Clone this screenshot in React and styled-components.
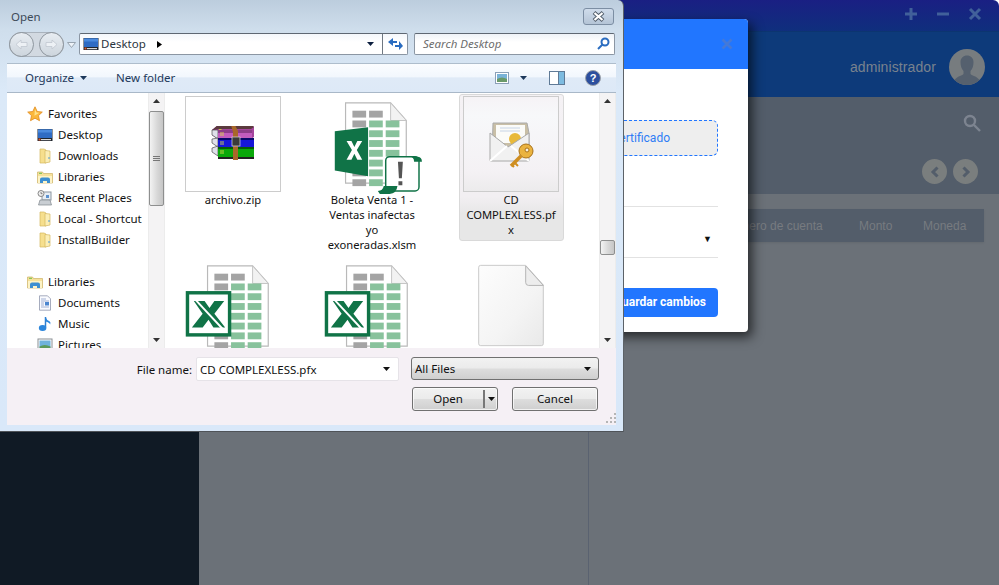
import React from 'react'
import styled, { createGlobalStyle } from 'styled-components'

const GlobalStyle = createGlobalStyle`
  html, body { margin: 0; padding: 0; background: #fff; }
  * { box-sizing: border-box; }
`

const UI_FONT = `'Noto Sans', 'Open Sans', sans-serif`
const WEB_FONT = `'Liberation Sans', Arial, sans-serif`

/* ---------- app behind the dialogs ---------- */

const Page = styled.div`
  position: relative;
  width: 999px;
  height: 585px;
  overflow: hidden;
  font-family: ${WEB_FONT};
`
const AppWindow = styled.div`
  display: flex;
  flex-direction: column;
  height: 100%;
  border-top-right-radius: 6px;
  overflow: hidden;
`
const TopBar = styled.div`
  flex: 0 0 32px;
  display: flex;
  justify-content: flex-end;
  align-items: center;
  gap: 18px;
  padding: 0 17px 4px 0;
  background: linear-gradient(#1a1f83, #0f2f7d);
  border-bottom: 1px solid #0c3570;
`
const WinGlyph = styled.svg`
  width: 14px;
  height: 14px;
  stroke: #41609a;
  stroke-width: 3;
  fill: none;
`
const Header = styled.div`
  flex: 0 0 65px;
  display: flex;
  justify-content: flex-end;
  align-items: center;
  gap: 13px;
  padding: 4px 14px 0 0;
  background: #0d3a7a;
`
const UserName = styled.span`
  font-size: 14px;
  letter-spacing: 0.1px;
  color: #79828e;
`
const Avatar = styled.svg`
  width: 36px;
  height: 36px;
  display: block;
`
const Body = styled.div`
  flex: 1;
  display: flex;
`
const Sidebar = styled.div`
  flex: 0 0 199px;
  background: #101a25;
`
const Main = styled.div`
  flex: 1;
  display: flex;
  flex-direction: column;
  background: #6b7178;
`
const MainHead = styled.div`
  flex: 0 0 97px;
  display: flex;
  flex-direction: column;
  align-items: flex-end;
  background: #535d6a;
  padding: 17px 21px 0 0;
`
const SearchIcon = styled.svg`
  width: 18px;
  height: 18px;
  margin-right: -3px;
  stroke: #7d8490;
  stroke-width: 2.4;
  fill: none;
`
const Pager = styled.div`
  display: flex;
  gap: 6px;
  margin-top: 27px;
`
const PagerButton = styled.div`
  width: 25px;
  height: 25px;
  border-radius: 50%;
  background: #7a7e7e;
  display: flex;
  align-items: center;
  justify-content: center;
  svg { width: 10px; height: 12px; stroke: #535d6a; stroke-width: 3; fill: none; }
`
const TableHead = styled.div`
  margin: 15px 15px 0 0;
  height: 33px;
  background: #535d6a;
  display: flex;
  justify-content: flex-end;
  align-items: center;
  font-size: 12px;
  color: #777b80;
  box-shadow: 0 1px 2px rgba(0, 0, 0, 0.08);
`
const HeadCell = styled.span`
  width: ${(p) => p.$w}px;
  flex: none;
  white-space: nowrap;
`
const TableBody = styled.div`
  flex: 1;
  margin-left: 389px;
  border-left: 1px solid #5a6270;
`

/* ---------- modal of the app ---------- */

const Modal = styled.div`
  position: absolute;
  left: 400px;
  top: 19px;
  width: 348px;
  height: 313px;
  background: #fff;
  border-radius: 4px;
  box-shadow: 4px 5px 12px rgba(0, 0, 0, 0.65);
  overflow: hidden;
  font-family: Roboto, ${WEB_FONT};
`
const ModalHead = styled.div`
  height: 50px;
  background: #2176ff;
  display: flex;
  justify-content: flex-end;
  align-items: center;
  padding-right: 15px;
  svg { width: 12px; height: 12px; stroke: #4479d8; stroke-width: 2.6; fill: none; }
`
const ModalBody = styled.div`
  padding: 51px 30px 0 0;
  display: flex;
  flex-direction: column;
  align-items: flex-end;
`
const DropZone = styled.div`
  width: 320px;
  height: 36px;
  background: #eeeeee;
  border: 1px dashed #2176ff;
  border-radius: 6px;
  display: flex;
  align-items: center;
  justify-content: flex-end;
  padding-right: 47px;
  font-size: 12px;
  color: #2f7df5;
`
const SelectRow = styled.div`
  width: 320px;
  height: 52px;
  margin-top: 50px;
  border-top: 1px solid #e2e2e2;
  border-bottom: 1px solid #e2e2e2;
  display: flex;
  align-items: center;
  justify-content: flex-end;
  padding: 14px 6px 0 0;
  font-size: 9px;
  color: #111;
`
const SaveButton = styled.div`
  width: 200px;
  height: 29px;
  margin-top: 30px;
  border-radius: 4px;
  background: #2176ff;
  color: #fff;
  font-size: 12px;
  font-weight: 700;
  display: flex;
  align-items: center;
  justify-content: flex-end;
  padding: 0 12px 2px 0;
`

/* ---------- Open dialog ---------- */

const Dialog = styled.div`
  position: absolute;
  left: 0;
  top: 0;
  width: 624px;
  height: 432px;
  display: flex;
  flex-direction: column;
  padding: 0 7px 6px;
  background: linear-gradient(#bccddd 0, #cfdeec 30px, #dbe9f8 90px, #d9e8f9 100%);
  border-right: 1px solid #5c6268;
  border-bottom: 1px solid #4f5358;
  border-top-right-radius: 6px;
  font-family: ${UI_FONT};
  font-size: 11.5px;
  color: #111;
`
const TitleBar = styled.div`
  height: 33px;
  flex: none;
  display: flex;
  justify-content: space-between;
  padding: 8px 2px 0 4px;
`
const Title = styled.span`
  color: #3d4a58;
  line-height: 18px;
`
const CloseButton = styled.div`
  width: 31px;
  height: 17px;
  border: 1px solid #7c8ea3;
  border-radius: 3px;
  background: linear-gradient(#cfdceb, #b4c4d6);
  display: flex;
  align-items: center;
  justify-content: center;
  svg { width: 13px; height: 11px; fill: none; }
`
const NavBar = styled.div`
  height: 30px;
  flex: none;
  display: flex;
  align-items: flex-start;
`
const BackForward = styled.div`
  width: 55px;
  height: 25px;
  margin: -1px 0 0 2px;
  flex: none;
  border-radius: 13px;
  background: #d2d9e1;
  box-shadow: inset 0 0 0 1px #aab3bd;
  display: flex;
  justify-content: space-between;
`
const RoundNav = styled.div`
  width: 25px;
  height: 25px;
  border-radius: 50%;
  border: 1px solid #8f979f;
  background: linear-gradient(#e8edf2, #cdd5dd);
  display: flex;
  align-items: center;
  justify-content: center;
  svg { width: 13px; height: 11px; fill: #edf1f5; stroke: #c0c7cf; stroke-width: 0.8; }
`
const HistoryCaret = styled.svg`
  width: 9px;
  height: 6px;
  margin: 9px 3px 0 3px;
  flex: none;
  fill: #eef3f8;
  stroke: #98a4b0;
`
const AddressBox = styled.div`
  width: 329px;
  height: 22px;
  flex: none;
  display: flex;
  align-items: center;
  background: linear-gradient(#f4f7fb, #fff 40%);
  border: 1px solid #8b96a3;
  border-top-color: #5e6772;
  border-radius: 2px;
  padding-left: 3px;
  color: #2a3440;
`
const AddressText = styled.span`
  margin: -2px 0 0 2px;
`
const Crumb = styled.svg`
  width: 5px;
  height: 7px;
  margin-left: 11px;
  fill: #000;
`
const AddressDrop = styled.div`
  margin-left: auto;
  width: 24px;
  height: 100%;
  display: flex;
  align-items: center;
  justify-content: center;
  border-right: 1px solid #6f7882;
`
const TinyCaret = styled.svg`
  width: 7px;
  height: 4px;
  flex: none;
  fill: ${(p) => p.$color || '#0c1f3f'};
`
const RefreshBox = styled.div`
  width: 24px;
  height: 100%;
  display: flex;
  align-items: center;
  justify-content: center;
  svg { width: 15px; height: 14px; fill: #2a6cc0; }
`
const SearchBox = styled.div`
  width: 201px;
  height: 22px;
  margin-left: 6px;
  flex: none;
  display: flex;
  align-items: center;
  justify-content: space-between;
  padding: 0 4px 2px 8px;
  background: linear-gradient(#eef2f7, #fff 40%);
  border: 1px solid #8b96a3;
  border-top-color: #5e6772;
  border-radius: 2px;
  font-style: italic;
  color: #6d6d6d;
  svg { width: 13px; height: 13px; stroke: #2a6cc0; fill: none; stroke-width: 2; }
`
const Pane = styled.div`
  flex: 1;
  display: flex;
  flex-direction: column;
  min-height: 0;
`
const ToolStrip = styled.div`
  height: 30px;
  flex: none;
  display: flex;
  align-items: center;
  padding: 0 15px 1px 18px;
  background: linear-gradient(#fbfdff 0, #f2f7fd 45%, #dfeaf7 50%, #dde9f7 100%);
  border-top: 1px solid #aebdcc;
  border-bottom: 1px solid #a9b8c8;
  color: #1e395b;
`
const ToolText = styled.span`
  white-space: nowrap;
`
const ToolIcon = styled.svg`
  display: block;
  flex: none;
  width: ${(p) => p.$w}px;
  height: ${(p) => p.$h}px;
  margin-left: ${(p) => p.$ml};
  margin-right: ${(p) => p.$mr || 0}px;
`
const Browser = styled.div`
  flex: 1;
  min-height: 0;
  display: flex;
  background: #fff;
`
const NavPane = styled.div`
  width: 141px;
  flex: none;
  overflow: hidden;
  padding-top: 10px;
`
const TreeRow = styled.div`
  height: 21px;
  display: flex;
  align-items: center;
  gap: 5px;
  padding-left: ${(p) => (p.$group ? 20 : 30)}px;
  margin-top: ${(p) => p.$gap || 0}px;
  white-space: nowrap;
  svg { width: 16px; height: 16px; flex: none; display: block; }
`
const ScrollBar = styled.div`
  width: 17px;
  flex: none;
  display: flex;
  flex-direction: column;
  align-items: center;
  background: #f4f3f4;
  border-left: 1px solid #ececec;
  border-right: 1px solid #ececec;
`
const ScrollArrow = styled.svg`
  width: 7px;
  height: 4px;
  flex: none;
  margin: ${(p) => p.$m};
  fill: #333;
`
const ScrollThumb = styled.div`
  width: 15px;
  height: ${(p) => p.$h}px;
  margin-top: ${(p) => p.$mt}px;
  flex: none;
  border: 1px solid #8e8f8f;
  border-radius: 2px;
  background: linear-gradient(90deg, #f3f3f3, #d8d8d8 55%, #c6c6c6);
  display: flex;
  flex-direction: column;
  justify-content: center;
  gap: 1px;
  align-items: center;
  i { display: block; width: 7px; height: 1px; background: #777; }
`
const FileArea = styled.div`
  flex: 1;
  min-width: 0;
  overflow: hidden;
  display: grid;
  grid-template-columns: repeat(3, 139px);
  justify-content: start;
  align-content: start;
  padding-top: 1px;
  margin-left: -1px;
`
const FileTile = styled.div`
  width: 105px;
  justify-self: center;
  padding: 1px 4px 3px 3px;
  border: 1px solid ${(p) => (p.$selected ? '#d9d9d9' : 'transparent')};
  border-radius: 3px;
  background: ${(p) => (p.$selected ? 'linear-gradient(#f5f2f5 0, #f2eff2 70%, #e7e7e7 82%)' : 'transparent')};
  text-align: center;
  line-height: 15px;
  align-self: start;
`
const Thumb = styled.div`
  width: 96px;
  height: 96px;
  border: 1px solid ${(p) => (p.$framed ? '#cccccc' : 'transparent')};
  background: ${(p) => (p.$selected ? 'linear-gradient(#f6f3f6, #f7f8fa 20%, #f4f1f4 80%, #ecebec)' : 'transparent')};
  display: flex;
  align-items: center;
  justify-content: center;
  svg { display: block; flex: none; }
`
const FileName = styled.div`
  word-break: break-word;
  margin: 0 -2px;
  font-size: 11.2px;
`
const Footer = styled.div`
  height: 77px;
  flex: none;
  display: grid;
  grid-template-columns: 189px 203px 188px;
  grid-template-rows: 24px 24px;
  row-gap: 6px;
  padding-top: 9px;
  background: #f5f0f5;
  position: relative;
`
const FileLabel = styled.label`
  display: flex;
  align-items: center;
  justify-content: flex-end;
  padding-right: 4px;
`
const NameInput = styled.div`
  display: flex;
  align-items: center;
  justify-content: space-between;
  padding: 0 8px 0 3px;
  background: #fff;
  border: 1px solid #e6e3e8;
  border-radius: 2px;
`
const TypeCombo = styled.div`
  margin-left: 12px;
  width: 188px;
  height: 23px;
  display: flex;
  align-items: center;
  justify-content: space-between;
  padding: 0 7px 0 3px;
  border: 1px solid #707070;
  border-radius: 3px;
  background: linear-gradient(#f2f2f2 0, #ebebeb 48%, #dddddd 52%, #cfcfcf 100%);
`
const ButtonRow = styled.div`
  grid-column: 2 / 4;
  display: flex;
  justify-content: flex-end;
  gap: 14px;
  margin-right: -11px;
`
const DialogButton = styled.div`
  width: ${(p) => p.$w}px;
  height: 24px;
  display: flex;
  align-items: center;
  justify-content: center;
  padding-bottom: 1px;
  border: 1px solid #707070;
  border-radius: 3px;
  background: linear-gradient(#f2f2f2 0, #ebebeb 48%, #dddddd 52%, #cfcfcf 100%);
  box-shadow: inset 0 0 0 1px rgba(255, 255, 255, 0.7);
`
const SplitLabel = styled.span`
  flex: 1;
  text-align: center;
`
const SplitDrop = styled.span`
  width: 14px;
  height: 18px;
  display: flex;
  align-items: center;
  justify-content: center;
  border-left: 2px solid #777;
`
const Grip = styled.svg`
  position: absolute;
  right: 0;
  bottom: 2px;
  width: 10px;
  height: 10px;
  fill: #b5b5b5;
`

/* ---------- drawn icons ---------- */

const DesktopIcon = () => (
  <svg viewBox="0 0 16 16" width="16" height="16">
    <rect x="0.5" y="2" width="15" height="12" fill="#20252c" />
    <rect x="1" y="2.5" width="14" height="8.5" fill="#2f6cc4" />
    <rect x="1" y="2.5" width="14" height="3" fill="#4a8ade" />
    <rect x="1.5" y="11.5" width="2" height="2" fill="#e05a2c" />
    <rect x="4" y="12" width="10" height="1.2" fill="#d8d8d8" />
  </svg>
)
const FolderIcon = () => (
  <svg viewBox="0 0 16 16">
    <path d="M3 1h4l2 1 0 13H3z" fill="#f6df8e" stroke="#d4b760" strokeWidth="0.7" />
    <path d="M8 2.5l5 .5v11l-5 1z" fill="#fbeeb6" stroke="#d4b760" strokeWidth="0.7" />
    <rect x="11.5" y="9" width="1" height="2" fill="#4f9ad8" />
  </svg>
)
const LibraryIcon = () => (
  <svg viewBox="0 0 16 16">
    <path d="M0.5 3h5l1 1.5h9V14H.5z" fill="#f6e19a" stroke="#cdb266" strokeWidth="0.7" />
    <rect x="2" y="3.8" width="3" height="1" fill="#6cc04a" />
    <path d="M1 7h14v7H1z" fill="#fdf3c6" />
    <path d="M3 14v-3.500q0-2 2-2h6q2 0 2 2V14h-3v-2H6v2z" fill="#3d8fd1" />
  </svg>
)
const RecentIcon = () => (
  <svg viewBox="0 0 16 16">
    <rect x="5" y="2" width="9" height="8" fill="#e6edf4" stroke="#8c96a0" />
    <rect x="9" y="5" width="3" height="3" fill="#5c92cf" />
    <circle cx="4" cy="3.5" r="3" fill="#eeeeee" stroke="#868686" />
    <path d="M4 2v1.700h1.500" stroke="#555" fill="none" strokeWidth="0.7" />
    <path d="M3 10h10l1.500 5h-13z" fill="#c9ced3" stroke="#7f868d" strokeWidth="0.7" />
  </svg>
)
const StarIcon = () => (
  <svg viewBox="0 0 16 16">
    <path d="M8 .8l2.200 4.700 5.100.6-3.800 3.500 1 5.100L8 12.200l-4.500 2.500 1-5.100L.7 6.100l5.100-.6z" fill="#fbb73a" stroke="#e08a1e" strokeWidth="0.8" />
    <path d="M8 3l1.400 3.400 3 .3-5 3z" fill="#ffe28a" />
  </svg>
)
const DocumentsIcon = () => (
  <svg viewBox="0 0 16 16">
    <path d="M2.500 .8h8l3 3v11.400h-11z" fill="#fafbff" stroke="#8f97ad" strokeWidth="0.8" />
    <path d="M4 4h5M4 6h8M4 8h3M4 10h3M4 12h8" stroke="#8aa0c8" strokeWidth="0.8" />
    <rect x="8" y="7" width="4" height="3.5" fill="#4c86cf" />
  </svg>
)
const MusicIcon = () => (
  <svg viewBox="0 0 16 16">
    <path d="M8.500 1v10.500" stroke="#2d7fd0" strokeWidth="1.5" />
    <ellipse cx="5.600" cy="12" rx="3.800" ry="3" fill="#2c86dc" />
    <path d="M8.500 1q1 3 4 4.200q1.500 1 .7 3.300q-.8-2.200-4.700-3z" fill="#2c86dc" />
  </svg>
)
const PicturesIcon = () => (
  <svg viewBox="0 0 16 16">
    <rect x="1" y="2" width="14" height="12" fill="#fff" stroke="#8a8f94" />
    <rect x="2.500" y="3.500" width="11" height="9" fill="#6fb2dc" />
    <path d="M2.500 12.500v-3q5-3 11 0v3z" fill="#5c9a5c" />
  </svg>
)
const ArchiveIcon = () => (
  <svg viewBox="0 2 44 36" width="44" height="36">
    <path d="M1 6l6-5h34l2 2v10l-3 2H7L1 11z" fill="#a5459c" />
    <path d="M1 6l6-5h34l2 2-3 2H7z" fill="#5b3a3e" />
    <path d="M8 5h3l-4 4z" fill="#c8c84a" />
    <path d="M1 6l6 0v9L1 11z" fill="#dfe0ea" stroke="#333" strokeWidth="0.6" />
    <rect x="7" y="6" width="34" height="8" fill="#c25cbe" />
    <rect x="7" y="6" width="34" height="3" fill="#8d3d89" />
    <path d="M1 15l6-1v9l-6-4z" fill="#dfe0ea" stroke="#333" strokeWidth="0.6" />
    <rect x="7" y="14" width="36" height="9" fill="#1616d8" />
    <rect x="7" y="14" width="36" height="2" fill="#08086a" />
    <path d="M1 24l6-2v10l-6-4z" fill="#dfe0ea" stroke="#333" strokeWidth="0.6" />
    <rect x="7" y="23" width="36" height="10" fill="#0aa80a" />
    <rect x="7" y="23" width="36" height="2" fill="#055c05" />
    <rect x="7" y="33" width="36" height="2" fill="#222" />
    <path d="M20 1h4l3 6v29h-5V8z" fill="#a8672a" />
    <rect x="21" y="13" width="8" height="9" fill="#3a3a3a" stroke="#ddd" strokeWidth="0.7" />
    <path d="M10 8v4M12 8v4M10 17v4M12 17v4M10 26v4M12 26v4" stroke="#d8d84a" strokeWidth="0.9" />
  </svg>
)
const Sheet = () => (
  <g>
    <path d="M1 1h46l16 18v64H1z" fill="#fff" stroke="#b9b9b9" strokeWidth="1.2" />
    <path d="M47 1v18h16z" fill="#f2f2f2" stroke="#c4c4c4" strokeWidth="1" />
    {[0, 1].map((c) => (
      <rect key={`top${c}`} x={8 + c * 17} y="9" width="14" height="7" fill="#a4a4a4" />
    ))}
    <rect x="8" y="19" width="14" height="7" fill="#a4a4a4" />
    {[0, 1, 2, 3, 4, 5, 6].map((r) =>
      [1, 2].map((c) => <rect key={`${r}-${c}`} x={8 + c * 17} y={19 + r * 10} width="14" height="7" fill="#88c29c" />)
    )}
    {[1, 2, 3, 4, 5, 6].map((r) => (
      <rect key={r} x="8" y={19 + r * 10} width="14" height="7" fill="#a4a4a4" />
    ))}
  </g>
)
const NewExcelIcon = () => (
  <svg viewBox="4 1 96 96" width="94" height="94" style={{ overflow: 'visible' }}>
    <g transform="translate(24 6)">
      <Sheet />
    </g>
    <path d="M14 36l34-4v50L14 76z" fill="#107347" />
    <path d="M26 46h5l3 6 3-6h5l-5.500 9 5.500 10h-5l-3-6-3 6h-5l5.500-10z" fill="#fff" />
    <rect x="66" y="62" width="34" height="35" rx="4" fill="#fff" stroke="#107347" strokeWidth="1.500" />
    <path d="M74 62h24q5 0 5 5h-8q0-5-5-5z" fill="#107347" />
    <path d="M58 97q5 0 6-5h14q-1 8-8 8H60z" fill="#107347" />
    <path d="M78.500 67h5l-1 17h-3zM79 87h4v4h-4z" fill="#555" />
  </svg>
)
const OldExcelIcon = () => (
  <svg viewBox="6 3 96 96" width="94" height="94" style={{ overflow: 'visible' }}>
    <g transform="translate(27 9)">
      <Sheet />
    </g>
    <rect x="7.500" y="37.500" width="43" height="43" fill="#fff" stroke="#107347" strokeWidth="3.500" />
    <path d="M14 46h11l5 7 5-7h10l-10 13 11 14H34l-5-8-6 8H12l11-14z" fill="#107347" />
    <path d="M16 45l28 30" stroke="#fff" strokeWidth="2" />
  </svg>
)
const CertificateIcon = () => (
  <svg viewBox="-2 0 48 48" width="48" height="48" style={{ overflow: 'visible' }}>
    <path d="M4 3h34l2 10v22H3z" fill="#c9bfa6" stroke="#aaa" />
    <rect x="7" y="5" width="29" height="18" fill="#fbfbf8" />
    <path d="M11 8h20M11 11h20" stroke="#c7d4e6" />
    <circle cx="26" cy="19" r="6" fill="#e8b93a" />
    <path d="M1 13l18 14 21-14v28H1z" fill="#f1f1f1" stroke="#a8a8a8" />
    <path d="M1 41l17-15M40 41L22 26" stroke="#fff" strokeWidth="2" />
    <circle cx="37" cy="31" r="7" fill="#eab33f" stroke="#a87118" />
    <circle cx="38" cy="30" r="2" fill="#f7f2e1" stroke="#a87118" />
    <path d="M32 36L22 46" stroke="#cf8e20" strokeWidth="3.500" />
    <path d="M26 43l3 3M23 45l2 2" stroke="#cf8e20" strokeWidth="2" />
  </svg>
)
const BlankIcon = () => (
  <svg viewBox="2 -1 96 96" width="94" height="94" style={{ overflow: 'visible' }}>
    <defs>
      <linearGradient id="blankFill" x1="0" y1="0" x2="1" y2="1">
        <stop offset="0" stopColor="#fdfdfd" />
        <stop offset="0.6" stopColor="#f4f4f4" />
        <stop offset="1" stopColor="#e9e9e9" />
      </linearGradient>
    </defs>
    <path d="M17 7.500q0-2 2-2h46l18 20v60q0 2-2 2H19q-2 0-2-2z" fill="url(#blankFill)" stroke="#c9c9c9" />
    <path d="M65 6v17q0 3 3 3h15z" fill="#ededed" stroke="#b4b4b4" />
  </svg>
)

const nameAt = (icon) => (typeof icon === 'function' ? React.createElement(icon) : icon)

const favorites = [
  ['Desktop', DesktopIcon],
  ['Downloads', FolderIcon],
  ['Libraries', LibraryIcon],
  ['Recent Places', RecentIcon],
  ['Local - Shortcut', FolderIcon],
  ['InstallBuilder', FolderIcon],
]
const libraries = [
  ['Documents', DocumentsIcon],
  ['Music', MusicIcon],
  ['Pictures', PicturesIcon],
]
const files = [
  { name: 'archivo.zip', icon: ArchiveIcon, framed: true },
  { name: 'Boleta Venta 1 - Ventas inafectas yo exoneradas.xlsm', icon: NewExcelIcon, lines: ['Boleta Venta 1 -', 'Ventas inafectas', 'yo', 'exoneradas.xlsm'] },
  { name: 'CD COMPLEXLESS.pfx', icon: CertificateIcon, framed: true, selected: true, lines: ['CD', 'COMPLEXLESS.pf', 'x'] },
  { name: '', icon: OldExcelIcon },
  { name: '', icon: OldExcelIcon },
  { name: '', icon: BlankIcon },
]

const Down = ({ color }) => (
  <TinyCaret viewBox="0 0 7 4" $color={color}>
    <path d="M0 0h7L3.500 4z" />
  </TinyCaret>
)

export default function App() {
  return (
    <Page>
      <GlobalStyle />
      <AppWindow>
        <TopBar>
          <WinGlyph viewBox="0 0 14 14"><path d="M7 1v12M1 7h12" /></WinGlyph>
          <WinGlyph viewBox="0 0 14 14"><path d="M1 7h12" /></WinGlyph>
          <WinGlyph viewBox="0 0 14 14"><path d="M2 2l10 10M12 2L2 12" /></WinGlyph>
        </TopBar>
        <Header>
          <UserName>administrador</UserName>
          <Avatar viewBox="0 0 36 36">
            <circle cx="18" cy="18" r="18" fill="#777c7f" />
            <path d="M5.500 31c3-4 7-4 9-6v-3c-2-2-3-5-3-9 0-4 3-6.500 6.500-6.500s6.500 2.500 6.500 6.500c0 4-1 7-3 9v3c2 2 6 2 9 6a18 18 0 0 1-25 0z" fill="#55606e" />
          </Avatar>
        </Header>
        <Body>
          <Sidebar />
          <Main>
            <MainHead>
              <SearchIcon viewBox="0 0 18 18">
                <circle cx="7" cy="7" r="5" />
                <path d="M11 11l6 6" />
              </SearchIcon>
              <Pager>
                <PagerButton><svg viewBox="0 0 10 12"><path d="M7.500 1.500L3 6l4.500 4.500" /></svg></PagerButton>
                <PagerButton><svg viewBox="0 0 10 12"><path d="M2.500 1.500L7 6l-4.500 4.500" /></svg></PagerButton>
              </Pager>
            </MainHead>
            <TableHead>
              <HeadCell $w={135}>Numero de cuenta</HeadCell>
              <HeadCell $w={64}>Monto</HeadCell>
              <HeadCell $w={61}>Moneda</HeadCell>
            </TableHead>
            <TableBody />
          </Main>
        </Body>
      </AppWindow>

      <Modal>
        <ModalHead>
          <svg viewBox="0 0 12 12"><path d="M1.500 1.500l9 9M10.500 1.500l-9 9" /></svg>
        </ModalHead>
        <ModalBody>
          <DropZone>Subir certificado</DropZone>
          <SelectRow>▼</SelectRow>
          <SaveButton>Guardar cambios</SaveButton>
        </ModalBody>
      </Modal>

      <Dialog>
        <TitleBar>
          <Title>Open</Title>
          <CloseButton>
            <svg viewBox="0 0 13 11">
              <path d="M2 1.500l9 8M11 1.500l-9 8" stroke="#4f5b68" strokeWidth="4" />
              <path d="M2.500 2l8 7M10.500 2l-8 7" stroke="#fff" strokeWidth="2.200" />
            </svg>
          </CloseButton>
        </TitleBar>
        <NavBar>
          <BackForward>
            <RoundNav><svg viewBox="0 0 13 11"><path d="M6 1L1 5.500 6 10V7.500h6v-4H6z" /></svg></RoundNav>
            <RoundNav><svg viewBox="0 0 13 11"><path d="M7 1l5 4.500L7 10V7.500H1v-4h6z" /></svg></RoundNav>
          </BackForward>
          <HistoryCaret viewBox="0 0 9 6"><path d="M.5.500h8L4.500 5.500z" /></HistoryCaret>
          <AddressBox>
            <DesktopIcon />
            <AddressText>Desktop</AddressText>
            <Crumb viewBox="0 0 5 7"><path d="M0 0l5 3.500L0 7z" /></Crumb>
            <AddressDrop><Down /></AddressDrop>
            <RefreshBox>
              <svg viewBox="0 0 15 14">
                <path d="M5 1v3h4v2H5v3L0 5zM11 13v-3H7V8h4V4l4 5z" />
              </svg>
            </RefreshBox>
          </AddressBox>
          <SearchBox>
            Search Desktop
            <svg viewBox="0 0 13 13"><circle cx="8" cy="5" r="3.500" /><path d="M5.500 7.500L1 12" /></svg>
          </SearchBox>
        </NavBar>
        <Pane>
          <ToolStrip>
            <ToolText>Organize</ToolText>
            <ToolIcon as="span" $w={6} $h={4} />
            <Down color="#1e395b" />
            <ToolIcon as="span" $w={29} $h={4} />
            <ToolText>New folder</ToolText>
            <ToolIcon viewBox="0 0 14 12" $w={14} $h={12} $ml="auto" $mr={11}>
              <rect x=".5" y=".5" width="13" height="11" fill="#fff" stroke="#8ba0b8" />
              <rect x="2" y="2" width="10" height="8" fill="#7ab3d8" />
              <path d="M2 10V7q5-3 10 0v3z" fill="#6a9a6a" />
            </ToolIcon>
            <Down color="#1e395b" />
            <ToolIcon viewBox="0 0 16 14" $w={16} $h={14} $ml="22px" $mr={20}>
              <rect x=".5" y=".5" width="15" height="13" fill="#fff" stroke="#5f7a96" />
              <rect x="10" y="1" width="5" height="12" fill="#7dbbe0" />
              <path d="M9.500 1v12" stroke="#5f7a96" />
            </ToolIcon>
            <ToolIcon viewBox="0 0 16 16" $w={16} $h={16}>
              <circle cx="8" cy="8" r="7.500" fill="#2c4f9e" stroke="#9aa0a8" />
              <text x="8" y="12" textAnchor="middle" fontSize="11" fontWeight="700" fill="#fff" fontFamily="'Liberation Sans', sans-serif">?</text>
            </ToolIcon>
          </ToolStrip>
          <Browser>
            <NavPane>
              <TreeRow $group><StarIcon />Favorites</TreeRow>
              {favorites.map(([label, icon]) => (
                <TreeRow key={label}>{nameAt(icon)}{label}</TreeRow>
              ))}
              <TreeRow $group $gap={21}><LibraryIcon />Libraries</TreeRow>
              {libraries.map(([label, icon]) => (
                <TreeRow key={label}>{nameAt(icon)}{label}</TreeRow>
              ))}
            </NavPane>
            <ScrollBar>
              <ScrollArrow viewBox="0 0 7 4" $m="6px 0 0"><path d="M0 4h7L3.500 0z" /></ScrollArrow>
              <ScrollThumb $h={95} $mt={8}><i /><i /><i /></ScrollThumb>
              <ScrollArrow viewBox="0 0 7 4" $m="auto 0 6px"><path d="M0 0h7L3.500 4z" /></ScrollArrow>
            </ScrollBar>
            <FileArea>
              {files.map((f, i) => (
                <FileTile key={i} $selected={f.selected}>
                  <Thumb $framed={f.framed} $selected={f.selected}>{nameAt(f.icon)}</Thumb>
                  <FileName>
                    {(f.lines || [f.name]).map((line) => <div key={line}>{line}</div>)}
                  </FileName>
                </FileTile>
              ))}
            </FileArea>
            <ScrollBar>
              <ScrollArrow viewBox="0 0 7 4" $m="6px 0 0"><path d="M0 4h7L3.500 0z" /></ScrollArrow>
              <ScrollThumb $h={15} $mt={137} />
              <ScrollArrow viewBox="0 0 7 4" $m="auto 0 6px"><path d="M0 0h7L3.500 4z" /></ScrollArrow>
            </ScrollBar>
          </Browser>
          <Footer>
            <FileLabel>File name:</FileLabel>
            <NameInput>CD COMPLEXLESS.pfx<Down color="#111" /></NameInput>
            <TypeCombo>All Files<Down color="#111" /></TypeCombo>
            <ButtonRow>
              <DialogButton $w={86}>
                <SplitLabel>Open</SplitLabel>
                <SplitDrop><Down color="#111" /></SplitDrop>
              </DialogButton>
              <DialogButton $w={86}>Cancel</DialogButton>
            </ButtonRow>
            <Grip viewBox="0 0 10 10">
              <rect x="8" y="0" width="2" height="2" /><rect x="4" y="4" width="2" height="2" />
              <rect x="8" y="4" width="2" height="2" /><rect x="0" y="8" width="2" height="2" />
              <rect x="4" y="8" width="2" height="2" /><rect x="8" y="8" width="2" height="2" />
            </Grip>
          </Footer>
        </Pane>
      </Dialog>
    </Page>
  )
}
